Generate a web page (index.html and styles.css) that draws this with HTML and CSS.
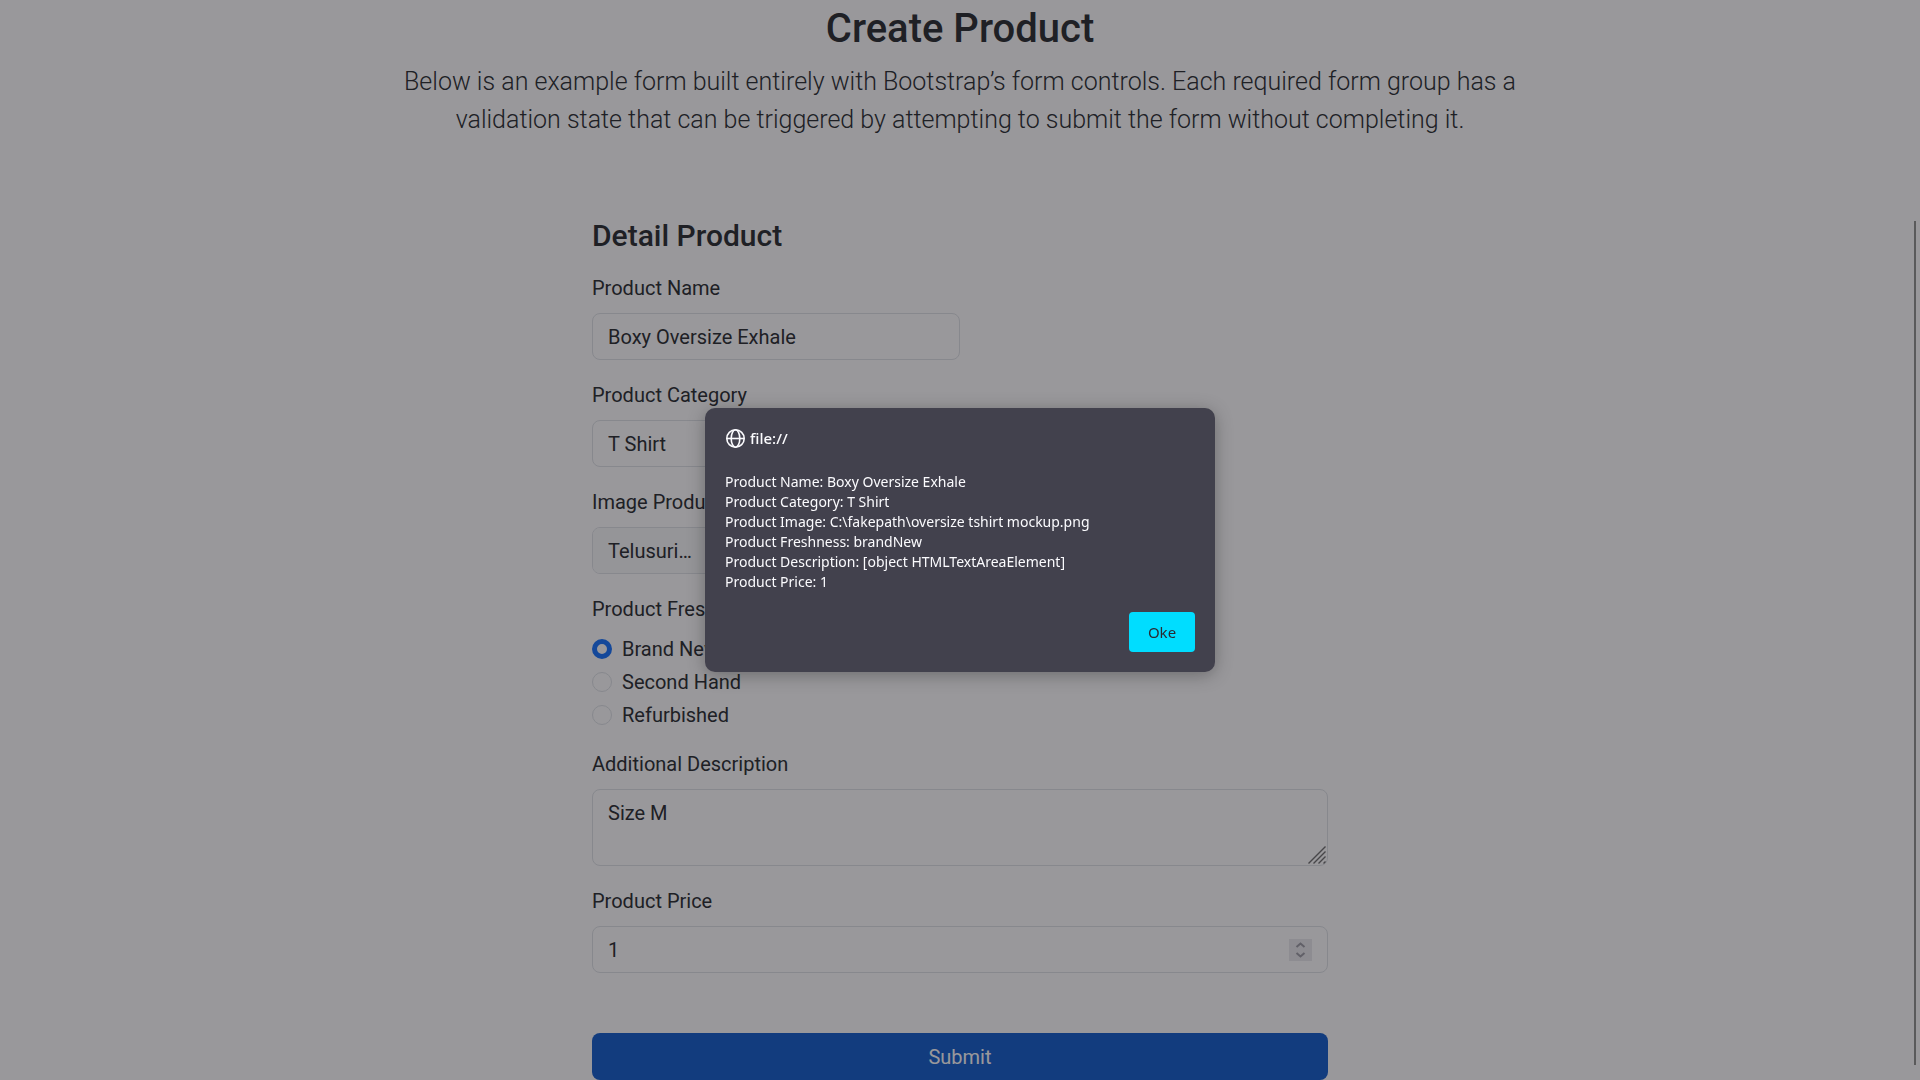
FILE: index.html
```
<!DOCTYPE html>
<html lang="en">
<head>
<meta charset="utf-8">
<title>Create Product</title>
<link rel="stylesheet" href="styles.css">
</head>
<body>
<main class="page">
  <header class="intro">
    <h1 class="intro-title">Create Product</h1>
    <p class="lead">Below is an example form built entirely with Bootstrap’s form controls. Each required form group has a validation state that can be triggered by attempting to submit the form without completing it.</p>
  </header>
  <form class="product-form">
    <h2 class="form-title">Detail Product</h2>
    <div class="field field-half">
      <label for="name">Product Name</label>
      <input class="control" type="text" id="name" value="Boxy Oversize Exhale">
    </div>
    <div class="field field-half">
      <label for="category">Product Category</label>
      <select class="control" id="category"><option>T Shirt</option></select>
    </div>
    <div class="field field-half">
      <label for="image">Image Product</label>
      <div class="control file-control">
        <input class="file-input" type="file" id="image">
        <label class="file-button" for="image">Telusuri…</label>
      </div>
    </div>
    <fieldset class="radios">
      <legend>Product Freshness</legend>
      <div class="radio-list">
        <label class="radio"><input type="radio" name="freshness" checked>Brand New</label>
        <label class="radio"><input type="radio" name="freshness">Second Hand</label>
        <label class="radio"><input type="radio" name="freshness">Refurbished</label>
      </div>
    </fieldset>
    <div class="field">
      <label for="description">Additional Description</label>
      <div class="control-wrap">
        <textarea class="control" id="description">Size M</textarea>
        <svg class="grip" width="18" height="18" viewBox="0 0 18 18" aria-hidden="true"><path d="M0.5 17.5 17.5 0.5M5.5 17.5 17.5 5.5M10.5 17.5 17.5 10.5M15.5 17.5 17.5 15.5"/></svg>
      </div>
    </div>
    <div class="field">
      <label for="price">Product Price</label>
      <div class="control-wrap">
        <input class="control" type="number" id="price" value="1">
        <svg class="spinner" width="23" height="22" viewBox="0 0 23 22" aria-hidden="true"><path d="M7.5 8 11.5 4.5 15.5 8M7.5 14 11.5 17.5 15.5 14"/></svg>
      </div>
    </div>
    <button class="submit" type="submit">Submit</button>
  </form>
</main>
<div class="backdrop">
  <dialog class="alert" open aria-labelledby="origin">
    <div class="alert-head">
      <svg width="20" height="20" viewBox="0 0 20 20" aria-hidden="true"><circle cx="10.5" cy="10.5" r="8.7"/><ellipse cx="10.5" cy="10.5" rx="4.3" ry="8.7"/><path d="M1.8 10.5H19.2"/></svg>
      <span id="origin">file://</span>
    </div>
    <p class="alert-text">Product Name: Boxy Oversize Exhale
Product Category: T Shirt
Product Image: C:\fakepath\oversize tshirt mockup.png
Product Freshness: brandNew
Product Description: [object HTMLTextAreaElement]
Product Price: 1</p>
    <button class="alert-ok" type="button">Oke</button>
  </dialog>
</div>
<div class="scroll-thumb"></div>
</body>
</html>
```
FILE: styles.css
```
*, *::before, *::after { box-sizing: border-box; }

body {
  margin: 0;
  background: #fff;
  color: #212529;
  font: 400 20px/30px Roboto, "Liberation Sans", sans-serif;
}

h1, h2, p { margin: 0; }

.page { padding: 5px 20px 0; }

.intro {
  max-width: 1140px;
  margin: 0 auto;
  text-align: center;
}

.intro-title {
  margin-bottom: 10px;
  font-size: 40px;
  font-weight: 500;
  line-height: 48px;
}

.lead {
  font-size: 25px;
  font-weight: 300;
  line-height: 38px;
}

.product-form {
  max-width: 736px;
  margin: 78px auto 0;
}

.form-title {
  margin-bottom: 18px;
  font-size: 30px;
  font-weight: 500;
  line-height: 38px;
}

.field {
  display: flex;
  flex-direction: column;
  gap: 10px;
  margin-bottom: 20px;
}

.field-half { width: 50%; }

.control {
  display: block;
  width: 100%;
  height: 47px;
  margin: 0;
  padding: 0 15px;
  border: 1px solid #dee2e6;
  border-radius: 8px;
  background: #fff;
  color: inherit;
  font: inherit;
  appearance: none;
  outline: none;
}

textarea.control {
  height: 77px;
  padding: 8px 15px;
  resize: none;
}

input[type="number"] { appearance: textfield; }
input[type="number"]::-webkit-inner-spin-button { display: none; }

.file-control {
  display: flex;
  padding: 0;
  overflow: hidden;
}

.file-input {
  position: absolute;
  width: 1px;
  height: 1px;
  opacity: 0;
}

.file-button {
  padding: 8px 15px;
  border-right: 1px solid #dee2e6;
  background: #f8f9fa;
}

.radios {
  margin: 0 0 19px;
  padding: 0;
  border: 0;
}

.radios legend {
  margin-bottom: 10px;
  padding: 0;
}

.radio-list {
  display: flex;
  flex-direction: column;
  gap: 3px;
}

.radio {
  display: flex;
  align-items: center;
  gap: 10px;
}

.radio input {
  width: 20px;
  height: 20px;
  margin: 0;
  border: 1px solid #dee2e6;
  border-radius: 50%;
  background: #fff;
  appearance: none;
}

.radio input:checked { border: 5px solid #0d6efd; }

.control-wrap { position: relative; }

.grip {
  position: absolute;
  right: 2px;
  bottom: 2px;
  fill: none;
  stroke: #6b6b6b;
  stroke-width: 1.4;
}

.spinner {
  position: absolute;
  top: 13px;
  right: 16px;
  background: #e9e9ed;
  fill: none;
  stroke: #9a9aa2;
  stroke-width: 2;
}

.submit {
  display: block;
  width: 100%;
  height: 47px;
  margin-top: 60px;
  border: 0;
  border-radius: 8px;
  background: #0a58ca;
  color: #fff;
  font: inherit;
}

.backdrop {
  position: fixed;
  inset: 0;
  display: flex;
  align-items: center;
  justify-content: center;
  background: rgba(28, 27, 34, 0.45);
}

.alert {
  position: static;
  width: 510px;
  max-width: 100%;
  margin: 0;
  padding: 20px;
  border: 0;
  border-radius: 10px;
  background: #42414d;
  box-shadow: 0 3px 18px rgba(0, 0, 0, 0.3);
  color: #fbfbfe;
  font: 400 14px/20px "Noto Sans", "Open Sans", sans-serif;
}

.alert-head {
  display: flex;
  align-items: center;
  gap: 5px;
  margin-bottom: 24px;
  font-size: 15px;
  font-weight: 500;
}

.alert-head svg {
  fill: none;
  stroke: #fbfbfe;
  stroke-width: 1.6;
}

.alert-text {
  margin-bottom: 20px;
  white-space: pre-line;
}

.alert-ok {
  display: block;
  width: 66px;
  height: 40px;
  margin-left: auto;
  padding: 0;
  border: 0;
  border-radius: 4px;
  background: #0df;
  color: #2b2a33;
  font: inherit;
  font-size: 15px;
}

/* Thin overlay scroll indicator along the window edge */
.scroll-thumb {
  position: fixed;
  top: 221px;
  right: 4px;
  bottom: 15px;
  width: 2px;
  background: #5a5a5b;
}
```
